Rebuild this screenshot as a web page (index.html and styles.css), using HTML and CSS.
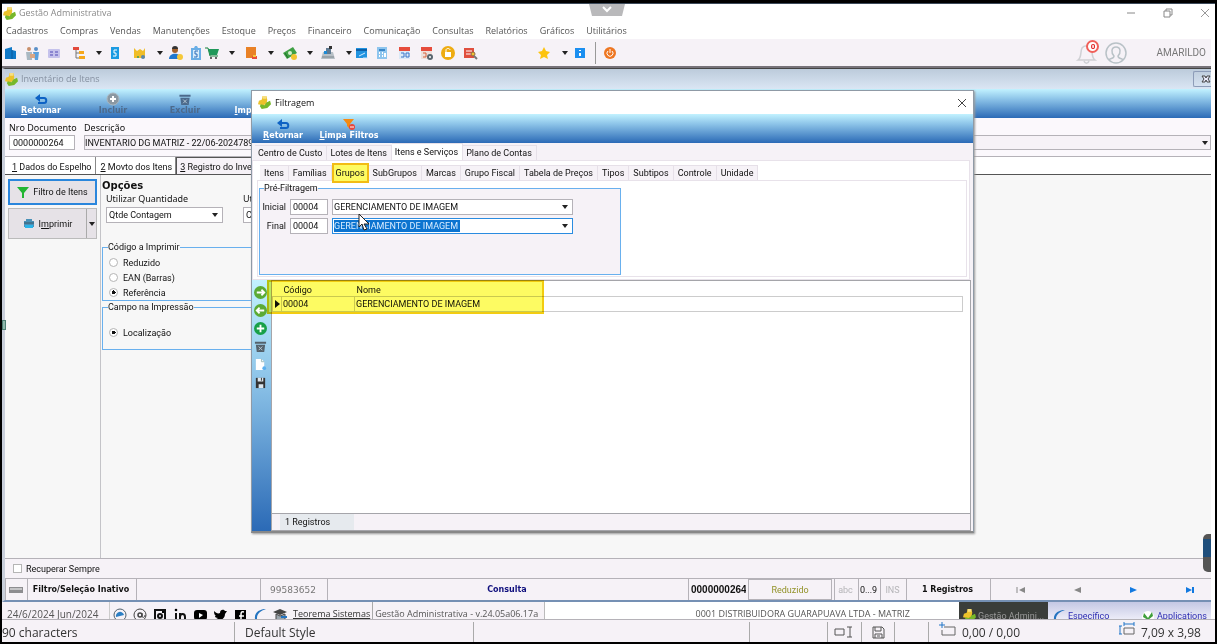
FILE: index.html
```html
<!DOCTYPE html>
<html lang="pt-BR">

<head>
    <meta charset="UTF-8">
    <title>Gestão Administrativa</title>
    <link rel="stylesheet" href="styles.css">
</head>

<body>
    <!-- shared icons -->
    <svg class="defs" aria-hidden="true">
        <symbol id="i-app" viewBox="0 0 14 14">
            <path d="M5 0h4l1 4-1 5-4 1-5-1 1-4 3-1z" fill="#ecc22b" />
            <path d="M3 9l4 1 2-3 4-2 1 4-4 4-6 1-2-3z" fill="#77b82a" />
            <path d="M5 0h4v3H5z" fill="#f7df80" />
        </symbol>
        <symbol id="i-back" viewBox="0 0 14 12">
            <path d="M4 4h6c3 0 3 5 0 5H4" fill="none" stroke="#0d62c4" stroke-width="2" />
            <path d="M6 0v8L1 4z" fill="#0d62c4" />
        </symbol>
        <symbol id="i-close" viewBox="0 0 10 10">
            <path d="M1 1l8 8M9 1L1 9" fill="none" stroke="currentColor" />
        </symbol>
        <symbol id="i-trash" viewBox="0 0 14 14">
            <path d="M1 2h12v2H1zM2 5h10l-1 8H3z" fill="currentColor" />
            <path d="M5 7l4 4M9 7l-4 4" stroke="#b9cbd8" fill="none" />
        </symbol>
    </svg>

    <div class="screen">
        <header class="titlebar">
            <svg class="ico" width="13" height="13"><use href="#i-app" /></svg>
            <span>Gestão Administrativa</span>
            <div class="win-btns">
                <button aria-label="Minimizar"><svg width="10" height="10"><path d="M1 5h8" stroke="#888" /></svg></button>
                <button aria-label="Restaurar"><svg width="10" height="10"><path d="M1 3h6v6H1zM3 3V1h6v6H7" fill="none" stroke="#888" /></svg></button>
                <button aria-label="Fechar"><svg width="10" height="10"><use href="#i-close" /></svg></button>
            </div>
        </header>
        <button class="pull" aria-label="Abrir barra"><svg width="36" height="12"><path d="M0 0h36l-3 12H3z" fill="#b9b9bb" /><path d="M14 3l4 4 4-4" fill="none" stroke="#fff" stroke-width="2" /></svg></button>

        <nav class="menu">
            <a href="#">Cadastros</a>
            <a href="#">Compras</a>
            <a href="#">Vendas</a>
            <a href="#">Manutenções</a>
            <a href="#">Estoque</a>
            <a href="#">Preços</a>
            <a href="#">Financeiro</a>
            <a href="#">Comunicação</a>
            <a href="#">Consultas</a>
            <a href="#">Relatórios</a>
            <a href="#">Gráficos</a>
            <a href="#">Utilitários</a>
        </nav>

        <div class="toolbar">
            <div class="tools">
                <button aria-label="Empresa"><svg viewBox="0 0 16 16"><path d="M3 4l7-2v3l4 1v8H3z" fill="#1079c8" /><path d="M10 5v9" stroke="#0a5a9c" /></svg></button>
                <button aria-label="Clientes"><svg viewBox="0 0 16 16"><circle cx="5" cy="4" r="2" fill="#c98f6b" /><circle cx="12" cy="4" r="2" fill="#5a90c8" /><path d="M2 7h6v8H3z" fill="#a9b8c2" /><path d="M9 7h6l-1 8h-3z" fill="#5aa0dc" /><path d="M6 9h5v4H6z" fill="#d8a684" /></svg></button>
                <button aria-label="Cartões"><svg viewBox="0 0 16 16"><rect x="2" y="4" width="12" height="9" rx="1" fill="#c5c2ec" /><path d="M4 7h3M9 7h3M4 10h3M9 10h3" stroke="#8a85d0" stroke-width="2" /></svg></button>
                <button aria-label="Estrutura"><svg viewBox="0 0 16 16"><path d="M2 2h6v3H2z" fill="#e2493c" /><path d="M5 5v8h4M5 8h4" fill="none" stroke="#777" /><path d="M8 6h5v3H8zM8 11h6v3H8z" fill="#f5a81c" /></svg></button>
                <i class="drop"></i>
                <button aria-label="Preço"><svg viewBox="0 0 16 16"><rect x="5" y="2" width="8" height="12" fill="#1c9be2" /><path d="M11 5H8v3h2v3H7" fill="none" stroke="#fff" /></svg></button>
                <button aria-label="Mapa"><svg viewBox="0 0 16 16"><path d="M2 3l3 3 3-2 3 2 2-3v10H2z" fill="#f0bd28" /><circle cx="11" cy="12" r="2" fill="#5c87a8" /><circle cx="6" cy="12" r="1" fill="#3f9f5c" /></svg></button>
                <i class="drop"></i>
                <button aria-label="Usuário"><svg viewBox="0 0 16 16"><circle cx="7" cy="5" r="3" fill="#a3622c" /><path d="M4 4a3 3 0 0 1 6 0z" fill="#333" /><path d="M1 14c0-7 12-7 12 0z" fill="#1e78cf" /><circle cx="12" cy="12" r="3" fill="#f5c83a" /></svg></button>
                <button aria-label="Lista de preços"><svg viewBox="0 0 16 16"><path d="M3 3h3l1-2h2l1 2h3v12H3z" fill="#6aaee6" /><path d="M5 5h6v8H5z" fill="#d8ecfa" /><path d="M10 6H7v3h2v3H6" fill="none" stroke="#2c6db8" /></svg></button>
                <button aria-label="Carrinho"><svg viewBox="0 0 16 16"><path d="M1 3h3l2 8h8" fill="none" stroke="#17803c" /><path d="M4 4h11l-2 6H6z" fill="#20985a" /><circle cx="7" cy="13" r="1" fill="#333" /><circle cx="12" cy="13" r="1" fill="#333" /></svg></button>
                <i class="drop"></i>
                <button aria-label="Caixa"><svg viewBox="0 0 16 16"><path d="M3 2h10v11H3z" fill="#e98126" /><path d="M9 11h5v3H9z" fill="#e84d3c" /><path d="M10 10h3v2h-3z" fill="#f5c83a" /></svg></button>
                <i class="drop"></i>
                <button aria-label="Dinheiro"><svg viewBox="0 0 16 16"><path d="M1 8l10-6 4 6-10 6z" fill="#3fa045" /><circle cx="8" cy="8" r="2" fill="#d6efcf" /><circle cx="12" cy="12" r="3" fill="#f3c431" /><path d="M3 8l3 5" stroke="#216f2b" /></svg></button>
                <i class="drop"></i>
                <button aria-label="Balança"><svg viewBox="0 0 16 16"><path d="M3 7h10l2 7H1z" fill="#b7bfc6" /><path d="M6 3h5v6H6z" fill="#607a92" /><path d="M4 6h3v3H4z" fill="#1e8bd6" /><path d="M9 1h3v3H9z" fill="#333" /><path d="M2 12h12" stroke="#7c858c" /></svg></button>
                <i class="drop"></i>
                <button aria-label="Relatório"><svg viewBox="0 0 16 16"><rect x="3" y="3" width="11" height="10" fill="#2193e0" /><path d="M3 5h11" stroke="#0c60a8" stroke-width="2" /><path d="M6 11l6-3M10 13h5" stroke="#cfeaff" /></svg></button>
                <button aria-label="Calculadora"><svg viewBox="0 0 16 16"><rect x="3" y="2" width="10" height="12" fill="#8ec5ee" /><path d="M5 4h6v2H5z" fill="#3b87c8" /><path d="M5 8h1M8 8h1M5 11h1M8 11h1M11 8v4" stroke="#fff" stroke-width="2" /></svg></button>
                <button aria-label="Calendário"><svg viewBox="0 0 16 16"><path d="M3 3h11v11H3z" fill="#dce9f6" /><path d="M3 2h11v4H3z" fill="#e64c3c" /><path d="M5 8h3v4H5M10 8h3v4h-3z" fill="none" stroke="#3b74c8" /></svg></button>
                <button aria-label="Agenda"><svg viewBox="0 0 16 16"><path d="M3 3h11v11H3z" fill="#eee0dc" /><path d="M3 2h11v4H3z" fill="#e64c3c" /><path d="M5 8h3v4H5" fill="none" stroke="#d8623c" /><circle cx="12" cy="12" r="3" fill="#59666f" /><circle cx="12" cy="12" r="1" fill="#fff" /></svg></button>
                <button aria-label="Bloquear"><svg viewBox="0 0 16 16"><circle cx="8" cy="8" r="7" fill="#eeac12" /><path d="M5 7h6v5H5z" fill="#fff" /><path d="M6 7V5c0-2 4-2 4 0" fill="none" stroke="#fff" /></svg></button>
                <button aria-label="Consultar"><svg viewBox="0 0 16 16"><path d="M2 3h10v10H2z" fill="#e04f3e" /><path d="M4 6h6M4 9h5" stroke="#fff" /><circle cx="11" cy="9" r="2" fill="#f3c431" stroke="#8b6a4a" /><path d="M12 11l3 3" stroke="#777" stroke-width="2" /></svg></button>
                <button aria-label="Favoritos"><svg viewBox="0 0 16 16"><path d="M8 2l2 4 4 1-3 3 1 4-4-2-4 2 1-4-3-3 4-1z" fill="#fdc40f" /></svg></button>
                <i class="drop"></i>
                <button aria-label="Informações"><svg viewBox="0 0 16 16"><rect x="3" y="3" width="10" height="10" fill="#1b8ff0" /><path d="M8 5v1M8 8v3" stroke="#fff" stroke-width="2" /></svg></button>
                <i class="sep"></i>
                <button aria-label="Sair"><svg viewBox="0 0 16 16"><circle cx="8" cy="8" r="6" fill="#ee7722" /><path d="M6 6a3 3 0 1 0 4 0M8 4v4" fill="none" stroke="#fff" /></svg></button>
            </div>
            <button class="bell" aria-label="Notificações"><svg width="26" height="26" viewBox="0 0 26 26"><path d="M3 20c4-3 2-8 4-12 2-3 7-3 9 0 2 4 0 9 4 12zM9 21c1 3 4 3 5 0" fill="none" stroke="#cfd0d4" stroke-width="1.5" /></svg><b>0</b></button>
            <svg width="22" height="22" viewBox="0 0 22 22"><circle cx="11" cy="11" r="10" fill="none" stroke="#b9c2c7" stroke-width="1.5" /><path d="M4 18c1-2 5-1 5-4-3-3-3-9 2-9s5 6 2 9c0 3 4 2 5 4" fill="none" stroke="#b9c2c7" stroke-width="1.5" /></svg>
            <span class="user">AMARILDO</span>
        </div>

        <main class="child">
            <div class="child-title">
                <svg class="ico" width="13" height="13"><use href="#i-app" /></svg>
                <span>Inventário de Itens</span>
                <button aria-label="Fechar janela"><svg width="10" height="8" viewBox="0 0 10 8"><path d="M1 1h3l1 2 1-2h3L7 4l2 3H6L5 5 4 7H1l2-3z" fill="#eef" stroke="#444" /></svg></button>
            </div>
            <div class="actions">
                <button><svg width="14" height="12"><use href="#i-back" /></svg><span><u>R</u>etornar</span></button>
                <button disabled><svg width="14" height="14" viewBox="0 0 14 14"><circle cx="7" cy="7" r="6" fill="#8b98a2" stroke="#a9b6be" /><path d="M7 4v6M4 7h6" stroke="#fff" stroke-width="2" /></svg><span>Incluir</span></button>
                <button disabled><svg width="14" height="13"><use href="#i-trash" /></svg><span>Excluir</span></button>
                <button><span><u>I</u>mprimir</span></button>
            </div>

            <div class="doc">
                <label for="nro">Nro Documento</label>
                <label for="desc">Descrição</label>
                <input id="nro" type="text" value="0000000264">
                <div class="desc">
                    <input id="desc" type="text" value="INVENTARIO DG MATRIZ - 22/06-20247896">
                    <button class="drop" aria-label="Abrir lista"></button>
                </div>
            </div>

            <div class="tabs">
                <button><u>1</u> Dados do Espelho</button>
                <button><u>2</u> Movto dos Itens</button>
                <button class="on"><u>3</u> Registro do Inven.</button>
            </div>

            <div class="body">
                <div class="side">
                    <button class="filter"><svg width="12" height="12" viewBox="0 0 12 12"><path d="M0 1h12L7 7v5H5V7z" fill="#22b532" /></svg>Filtro de Itens</button>
                    <div class="print">
                        <button><svg width="12" height="11" viewBox="0 0 12 11"><path d="M1 3h2V1h6v2h2v6H1z" fill="#4a91b8" /><path d="M2 7h8v3H2z" fill="#2cb4e8" /><path d="M1 5h10" stroke="#3d5666" /></svg><span>I<u>m</u>primir</span></button>
                        <button aria-label="Opções de impressão"><i class="drop"></i></button>
                    </div>
                </div>
                <div class="options">
                    <h2>Opções</h2>
                    <div class="qty">
                        <label for="qtd">Utilizar Quantidade</label>
                        <label for="cus">Ut.</label>
                        <div class="sel"><select id="qtd"><option>Qtde Contagem</option></select><i class="drop"></i></div>
                        <div class="sel"><select id="cus"><option>Custo</option></select><i class="drop"></i></div>
                    </div>
                    <fieldset>
                        <legend>Código a Imprimir</legend>
                        <label><input type="radio" name="cod">Reduzido</label>
                        <label><input type="radio" name="cod">EAN (Barras)</label>
                        <label><input type="radio" name="cod" checked>Referência</label>
                    </fieldset>
                    <fieldset class="campo">
                        <legend>Campo na Impressão</legend>
                        <label><input type="radio" name="campo" checked>Localização</label>
                    </fieldset>
                </div>
            </div>

            <div class="recover">
                <label><input type="checkbox">Recuperar Sempre</label>
            </div>
            <div class="status">
                <div><svg width="14" height="6" viewBox="0 0 14 6"><path d="M0 0h14v6H0z" fill="#8d8d90" /><path d="M1 1h12v2H1z" fill="#c4c4c6" /></svg></div>
                <div class="strong">Filtro/Seleção Inativo</div>
                <div></div>
                <div class="dim">99583652</div>
                <div class="query">Consulta</div>
                <div class="num">0000000264</div>
                <div class="olive">Reduzido</div>
                <div class="off">abc</div>
                <div>0...9</div>
                <div class="off">INS</div>
                <div class="strong">1 Registros</div>
                <div class="pager">
                    <button aria-label="Primeiro" disabled><svg width="10" height="8"><path d="M1 1v6" stroke="currentColor" /><path d="M9 1v6L3 4z" fill="currentColor" /></svg></button>
                    <button aria-label="Anterior" disabled><svg width="10" height="8"><path d="M9 1v6L2 4z" fill="currentColor" /></svg></button>
                    <button aria-label="Próximo"><svg width="10" height="8"><path d="M1 1v6l7-3z" fill="currentColor" /></svg></button>
                    <button aria-label="Último"><svg width="10" height="8"><path d="M1 1v6l6-3z" fill="currentColor" /><path d="M8 1v6" stroke="currentColor" stroke-width="2" /></svg></button>
                </div>
            </div>
        </main>

        <div class="taskbar">
            <span class="date">24/6/2024 Jun/2024</span>
            <div class="social">
                <svg viewBox="0 0 14 14"><circle cx="7" cy="7" r="6" fill="none" stroke="#51606c" /><path d="M3 9a4 4 0 0 1 8-2l-4 1z" fill="#2d7fc4" /></svg>
                <svg viewBox="0 0 14 14"><circle cx="7" cy="7" r="6" fill="none" stroke="#444" /><circle cx="7" cy="7" r="2" fill="none" stroke="#444" stroke-width="1.5" /><path d="M9 5v3c0 2 3 2 3-1" fill="none" stroke="#444" /></svg>
                <svg viewBox="0 0 14 14"><path d="M2 2h10v11H2z" fill="none" stroke="#111" stroke-width="2" /><circle cx="7" cy="8" r="2" fill="none" stroke="#111" stroke-width="2" /><path d="M9 3h2v2H9z" /></svg>
                <svg viewBox="0 0 14 14"><path d="M3 5v9M7 14V5m0 4c0-4 5-4 5 0v5" fill="none" stroke="#111" stroke-width="2" /><circle cx="3" cy="2" r="1.3" /></svg>
                <svg viewBox="0 0 14 14"><rect x="1" y="2" width="13" height="10" rx="3" /><path d="M6 5v5l4-3z" fill="#fff" /></svg>
                <svg viewBox="0 0 14 14"><path d="M1 3c2 2 4 3 6 2 0-4 4-4 5-2h2l-2 3c0 6-7 8-11 5 2 0 3 0 4-1-2 0-3-1-3-2h1C1 7 1 4 1 3z" /></svg>
                <svg viewBox="0 0 14 14"><path d="M2 2h11v12H2z" /><path d="M11 4c-3-1-3 1-3 3v7M6 8h5" fill="none" stroke="#fff" stroke-width="1.5" /></svg>
                <svg viewBox="0 0 14 14"><path d="M13 1C7 1 1 4 2 11l3 3C2 8 6 3 13 1z" fill="#2474c0" /></svg>
                <svg viewBox="0 0 14 14"><path d="M0 4l7-3 7 3-7 3z" fill="#444" /><path d="M3 6v6l5 2 4-2V6l-5 2z" fill="#9aa5ad" stroke="#444" /><path d="M8 9h6" stroke="#2474c0" stroke-width="2" /></svg>
            </div>
            <a href="#" class="site">Teorema Sistemas</a>
            <span class="version">Gestão Administrativa - v.24.05a06.17a</span>
            <span class="company">0001 DISTRIBUIDORA GUARAPUAVA LTDA - MATRIZ</span>
            <div class="apps">
                <button class="cur"><svg width="13" height="13"><use href="#i-app" /></svg>Gestão Admini...</button>
                <button><svg width="14" height="14" viewBox="0 0 14 14"><path d="M13 1C7 1 1 4 2 11l3 3C2 8 6 3 13 1z" fill="#2474c0" /></svg>Específico</button>
                <button class="last"><svg width="14" height="14" viewBox="0 0 14 14"><circle cx="7" cy="8" r="6" fill="#fff" /><path d="M3 4l4 5 4-6 1 4-5 4-5-3z" fill="#3f9f3c" /></svg>Applications</button>
            </div>
        </div>

        <footer class="office">
            <div>90 characters</div>
            <div class="style">Default Style</div>
            <div></div>
            <div></div>
            <div class="mid"><svg width="22" height="14" viewBox="0 0 22 14"><path d="M1 4h9v6H1zM13 2h5M13 12h5M16 2v10" fill="none" stroke="#555" /></svg></div>
            <div class="mid"><svg width="13" height="13" viewBox="0 0 13 13"><path d="M1 1h9l2 2v9H1zM3 1v4h6V1M3 12V8h7v4M5 10h3" fill="none" stroke="#555" /></svg></div>
            <div></div>
            <div class="pos">
                <svg width="18" height="16" viewBox="0 0 18 16"><path d="M5 5h11v8H3V8" fill="none" stroke="#666" /><path d="M3 0v6M0 3h6" stroke="#2277c8" /></svg>
                <span>0,00 / 0,00</span>
            </div>
            <div class="size">
                <svg width="18" height="16" viewBox="0 0 18 16"><path d="M6 6h10v6H6z" fill="none" stroke="#666" /><path d="M1 4h3M1 12h3M2 4v8M6 2h10M6 0v4M16 0v4" fill="none" stroke="#2277c8" /></svg>
                <span>7,09 x 3,98</span>
            </div>
        </footer>

        <div class="grip"></div>
        <div class="bubble"></div>

        <!-- filter dialog -->
        <section class="dialog" role="dialog" aria-label="Filtragem">
            <div class="dlg-title">
                <svg class="ico" width="13" height="13"><use href="#i-app" /></svg>
                <span>Filtragem</span>
                <button aria-label="Fechar"><svg width="10" height="10"><use href="#i-close" /></svg></button>
            </div>
            <div class="actions">
                <button><svg width="14" height="12"><use href="#i-back" /></svg><span><u>R</u>etornar</span></button>
                <button><svg width="14" height="13" viewBox="0 0 14 13"><path d="M1 1h11L8 6v5L5 8V6z" fill="#f58a12" /><circle cx="10" cy="9" r="3" fill="#e8453c" /><path d="M8 9h4" stroke="#fff" /></svg><span><u>L</u>impa Filtros</span></button>
            </div>
            <div class="dtabs">
                <button>Centro de Custo</button>
                <button>Lotes de Itens</button>
                <button class="on">Itens e Serviços</button>
                <button>Plano de Contas</button>
            </div>
            <div class="pane">
                <div class="dtabs sub">
                    <button>Itens</button>
                    <button>Famílias</button>
                    <button class="marked">Grupos</button>
                    <button>SubGrupos</button>
                    <button>Marcas</button>
                    <button>Grupo Fiscal</button>
                    <button>Tabela de Preços</button>
                    <button>Tipos</button>
                    <button>Subtipos</button>
                    <button>Controle</button>
                    <button>Unidade</button>
                </div>
                <div class="inner">
                    <fieldset class="pre">
                        <legend>Pré-Filtragem</legend>
                        <label for="ini">Inicial</label>
                        <input id="ini" type="text" value="00004">
                        <div class="combo">
                            <input type="text" aria-label="Grupo inicial" value="GERENCIAMENTO DE IMAGEM">
                            <button class="drop" aria-label="Abrir lista"></button>
                        </div>
                        <label for="fim">Final</label>
                        <input id="fim" type="text" value="00004">
                        <div class="combo focus">
                            <input type="text" aria-label="Grupo final" value="GERENCIAMENTO DE IMAGEM">
                            <button class="drop" aria-label="Abrir lista"></button>
                        </div>
                    </fieldset>
                </div>
            </div>
            <div class="result">
                <div class="rail">
                    <button aria-label="Adicionar"><svg viewBox="0 0 14 14"><circle cx="7" cy="7" r="7" fill="#5bab35" /><path d="M3 7h7M8 4l3 3-3 3" fill="none" stroke="#fff" stroke-width="2" /></svg></button>
                    <button aria-label="Remover"><svg viewBox="0 0 14 14"><circle cx="7" cy="7" r="7" fill="#5bab35" /><path d="M11 7H4M6 4L3 7l3 3" fill="none" stroke="#fff" stroke-width="2" /></svg></button>
                    <button aria-label="Incluir"><svg viewBox="0 0 14 14"><circle cx="7" cy="7" r="7" fill="#18a048" /><path d="M7 3v8M3 7h8" stroke="#fff" stroke-width="2" /></svg></button>
                    <button class="bin" aria-label="Excluir"><svg viewBox="0 0 14 14"><use href="#i-trash" /></svg></button>
                    <button aria-label="Novo"><svg viewBox="0 0 14 14"><path d="M2 1h6l3 3v9H2z" fill="#fff" /><path d="M8 1v3h3" fill="none" stroke="#9bb" /><circle cx="11" cy="11" r="2" fill="#5ab0f0" /></svg></button>
                    <button aria-label="Salvar"><svg viewBox="0 0 14 14"><path d="M2 2h10v11H2z" fill="#333" /><path d="M4 2h6v4H4zM5 9h5v4H5z" fill="#dce6ee" /><path d="M8 2v3" stroke="#333" /></svg></button>
                </div>
                <div class="list">
                    <table>
                        <thead>
                            <tr><th class="mark"></th><th class="code">Código</th><th>Nome</th></tr>
                        </thead>
                        <tbody>
                            <tr><td class="mark"><i></i></td><td>00004</td><td>GERENCIAMENTO DE IMAGEM</td></tr>
                        </tbody>
                    </table>
                    <div class="count"><span>1 Registros</span></div>
                </div>
                <div class="highlight"></div>
            </div>
            <svg class="cursor" width="12" height="18" viewBox="0 0 12 18"><path d="M1 1v13l3-3 2 6 3-1-3-5h5z" fill="#fff" stroke="#222" /></svg>
        </section>
    </div>
</body>

</html>
```
FILE: styles.css
```css
* {
    box-sizing: border-box;
    margin: 0;
    padding: 0;
}
:root {
    --ui: Roboto, "Liberation Sans", sans-serif;
    --menu: "Open Sans", "Noto Sans", sans-serif;
    --bold: "DejaVu Sans", sans-serif;
    --face: #f6f2f7;
    --line: #b5b2b8;
    --blue: #69b0ee;
    --bar: linear-gradient(#c2f2ff, #8cc3e8 35%, #2b6ab6);
}
body {
    background: #000;
    font: 9px/12px var(--ui);
    color: #111;
}
button {
    border: 0;
    background: none;
    font: inherit;
    color: inherit;
}
input, select {
    font: inherit;
    color: inherit;
    min-width: 0;
    border-radius: 0;
    outline: 0;
}
a {
    color: inherit;
    text-decoration: none;
}
svg {
    display: block;
    flex: none;
}
.defs {
    position: absolute;
    width: 0;
    height: 0;
}
.screen {
    position: relative;
    display: flex;
    flex-direction: column;
    min-height: 100vh;
    border: 2px solid #000;
    border-top-width: 3px;
    background: #fff;
    box-shadow: inset 0 1px #3c4a5a;
    padding: 1px 4px 0 0;
}

/* small black triangle used by every drop-down */
.drop {
    display: block;
    width: 14px;
    height: 4px;
    flex: none;
}
.drop::after {
    content: '';
    display: block;
    margin: 0 auto;
    width: 0;
    border: 3px solid transparent;
    border-top: 4px solid #222;
    border-bottom: 0;
}

/* main window */
.titlebar {
    display: flex;
    align-items: center;
    height: 18px;
    padding: 0 1px;
    gap: 3px;
    font: 9px/12px var(--menu);
    color: #8a8a8a;
}
.win-btns {
    display: flex;
    gap: 27px;
    margin-left: auto;
    color: #999;
}
.pull {
    position: absolute;
    top: 1px;
    left: 587px;
}
.menu {
    display: flex;
    align-items: center;
    height: 17px;
    padding-left: 4px;
    gap: 12px;
    font: 9px/12px var(--menu);
    color: #555;
}
.toolbar {
    display: flex;
    align-items: center;
    height: 29px;
    background: var(--face);
    border-bottom: 2px solid #77737a;
}
.tools {
    display: grid;
    align-items: center;
    grid-template-columns: 22px 22px 25px 24px 11px 26px 24px 12px 20px 16px 24px 15px 24px 15px 24px 14px 25px 8px 21px 22px 22px 22px 22px 74px 25px 11px 23px 7px 16px;
    margin-right: auto;
}
.tools button, .tools svg {
    width: 16px;
    height: 16px;
}
.tools .drop {
    width: 8px;
}
.sep {
    width: 1px;
    height: 22px;
    background: #999;
}
.bell {
    position: relative;
    margin-right: 4px;
}
.bell b {
    position: absolute;
    top: 0;
    right: 2px;
    width: 13px;
    height: 13px;
    border: 2px solid #f0605a;
    border-radius: 50%;
    background: #fff;
    font: bold 8px/9px var(--ui);
    color: #e02020;
}
.user {
    margin: 0 5px 0 29px;
    font-size: 10px;
    color: #777;
}

/* inventory window */
.child {
    display: flex;
    flex-direction: column;
    flex: 1;
    border-top: 1px solid #444;
    border-left: 3px solid #c9cfdb;
    border-bottom: 2px solid #7590b4;
}
.child-title {
    display: flex;
    align-items: center;
    height: 20px;
    gap: 3px;
    background: linear-gradient(#bccbdb, #dae6f4);
    font: 9px/12px var(--menu);
    color: #8590a0;
}
.child-title button {
    margin-left: auto;
    padding: 3px 0 3px 7px;
    border: 1px solid #8d9cb8;
    border-right: 0;
    border-radius: 2px 0 0 2px;
}
.actions {
    display: grid;
    grid-template-columns: 72px 72px 72px 66px;
    height: 29px;
    background: var(--bar);
    font: bold 8px/10px var(--bold);
    color: #fff;
}
.actions button {
    display: flex;
    flex-direction: column;
    align-items: center;
    justify-content: flex-end;
    padding-bottom: 2px;
}
.actions button:disabled {
    color: #4c6a8c;
}
.doc {
    display: grid;
    grid-template-columns: 66px 1fr;
    column-gap: 9px;
    padding: 3px 0 6px 4px;
    background: #fbf8fc;
    border-bottom: 1px solid var(--line);
    line-height: 14px;
}
.doc label, .qty label {
    white-space: nowrap;
    font: 9px/14px "Noto Sans", sans-serif;
}
.doc input {
    width: 100%;
    height: 15px;
    padding: 0 3px;
    border: 1px solid var(--line);
    background: #fff;
}
.doc .desc {
    display: flex;
    align-items: center;
    background: var(--face);
    border: 1px solid var(--line);
}
.doc .desc input {
    height: 13px;
    border: 0;
    padding: 0;
    background: var(--face);
}
.desc .drop {
    width: 10px;
}
.tabs {
    display: flex;
    height: 18px;
    padding-left: 2px;
    border-bottom: 1px solid #555;
    background: #fff;
}
.tabs button {
    padding: 3px 3px 0 5px;
    border-right: 1px solid #888;
    white-space: nowrap;
}
.tabs .on {
    border: 1px solid #555;
    border-bottom: 0;
    padding: 2px 12px 0 3px;
    background: var(--face);
}
.body {
    display: flex;
    flex: 1;
    background: #f7f7f7;
}
.side {
    width: 96px;
    padding: 4px 3px 0;
    border-right: 1px solid #c4c4c8;
}
.side button {
    display: flex;
    align-items: center;
    justify-content: center;
    gap: 4px;
    background: #e6e2e7;
}
.side .filter {
    width: 100%;
    height: 26px;
    border: 2px solid #2a86dc;
}
.print {
    display: flex;
    height: 31px;
    margin-top: 3px;
    border: 1px solid #bbb;
}
.print button {
    flex: 1;
}
.print button + button {
    flex: none;
    width: 10px;
    border-left: 1px solid #aaa;
}
.print .drop {
    width: 8px;
}
.options {
    flex: 1;
    padding: 5px 1px;
}
.options h2 {
    font: bold 10px/12px var(--bold);
}
.qty {
    display: grid;
    grid-template-columns: 117px 117px;
    column-gap: 20px;
    padding-left: 4px;
}
.sel {
    display: flex;
    align-items: center;
    height: 16px;
    margin-top: 1px;
    border: 1px solid var(--line);
    background: #fff;
}
.sel select {
    flex: 1;
    height: 14px;
    padding-left: 2px;
    border: 0;
    background: #fff;
    appearance: none;
}
fieldset {
    border: 1px solid var(--blue);
}
legend {
    margin-left: 5px;
}
.options fieldset {
    width: 300px;
    height: 60px;
    margin-top: 18px;
    padding-top: 2px;
}
.options .campo {
    height: 49px;
    margin-top: 0;
    padding-top: 0;
}
.options fieldset label {
    display: flex;
    align-items: center;
    gap: 5px;
    height: 15px;
    padding-left: 6px;
}
.options .campo label {
    margin-top: 12px;
}
input[type=radio], input[type=checkbox] {
    appearance: none;
    width: 9px;
    height: 9px;
    border: 1px solid #b5b5b5;
    background: #fff;
}
input[type=radio] {
    border-radius: 50%;
}
input[type=radio]:checked {
    background: radial-gradient(#111 2px, #fff 2px);
}
.recover {
    display: flex;
    align-items: center;
    height: 21px;
    padding-left: 8px;
    border-top: 1px solid var(--line);
    border-bottom: 1px solid var(--line);
    background: var(--face);
}
.recover label {
    display: flex;
    align-items: center;
    gap: 4px;
}
.status {
    display: grid;
    grid-template-columns: 22px 109px 124px 67px 1fr 60px 86px 24px 22px 26px 84px 221px;
    height: 21px;
    background: var(--face);
}
.status > div {
    display: flex;
    align-items: center;
    justify-content: center;
    border-left: 1px solid var(--line);
    margin-right: 2px;
    overflow: hidden;
    white-space: nowrap;
}
.status .strong, .status .query {
    font: bold 8px/12px var(--bold);
}
.status .num {
    font: bold 10px/12px "Liberation Sans", sans-serif;
    justify-content: flex-start;
    padding-left: 2px;
}
.status .dim {
    font: 9px/12px var(--bold);
    color: #777;
}
.status .query {
    color: #10107e;
}
.status .olive {
    color: #929228;
    border: 1px solid var(--line);
}
.status .off {
    color: #b5b5b8;
}
.status .pager {
    justify-content: space-between;
    padding: 0 14px 0 25px;
    color: #1279e0;
}
.pager button:disabled {
    color: #888;
}

/* taskbar, cut by the status bar below */
.taskbar {
    display: flex;
    height: 17px;
    overflow: hidden;
    background: #fff;
    font: 9px/24px var(--menu);
    color: #555;
    white-space: nowrap;
}
.taskbar .date {
    width: 108px;
    padding-left: 5px;
    border-right: 1px solid #ccc;
    font-size: 10px;
    background: var(--face);
}
.social {
    display: flex;
    gap: 6px;
    padding: 6px 6px 0 3px;
    background: var(--face);
}
.social svg {
    width: 14px;
    height: 14px;
}
.site {
    padding-right: 2px;
    border-right: 1px solid #aaa;
    text-decoration: underline;
    color: #333;
    background: var(--face);
}
.version {
    padding: 0 6px 0 2px;
    border-right: 1px solid #bbb;
    background: var(--face);
}
.company {
    margin-left: auto;
    padding-right: 49px;
}
.apps {
    display: flex;
    background: linear-gradient(#c4c8e4, #ececf8);
    color: #2b2bb0;
}
.apps button {
    display: flex;
    align-items: center;
    width: 89px;
    height: 25px;
    padding: 2px 4px 0;
    gap: 2px;
    font: 9px/12px var(--ui);
    text-align: left;
}
.apps .cur {
    background: #3a3d3a;
    color: #999;
}
.apps .last {
    width: 74px;
}

/* office status bar */
.office {
    display: grid;
    grid-template-columns: 232px 239px 276px 78px 34px 33px 34px 1fr 97px;
    height: 23px;
    margin-right: -4px;
    padding-top: 2px;
    border-top: 1px solid var(--line);
    background: var(--face);
    font: 12px/22px "Open Sans", "Noto Sans", sans-serif;
    color: #333;
}
.office > div {
    border-left: 1px solid #aaa;
    height: 20px;
    white-space: nowrap;
}
.office > div:first-child, .office .size {
    border-left: 0;
}
.office .style {
    padding-left: 10px;
}
.office .mid {
    display: flex;
    align-items: center;
    justify-content: center;
}
.office .pos, .office .size {
    display: flex;
    gap: 5px;
}
.office .pos {
    padding-left: 10px;
}

/* things that float over the window edge */
.grip {
    position: absolute;
    left: 0;
    top: 317px;
    width: 4px;
    height: 10px;
    border: 1px solid #4f7f74;
    background: #8fb8ac;
}
.bubble {
    position: absolute;
    right: 4px;
    bottom: 70px;
    width: 8px;
    height: 38px;
    border-radius: 5px 0 0 5px;
    background: linear-gradient(#555 5px, #1f4f7c 5px, #1f4f7c 23px, #555 23px);
}

/* filter dialog */
.dialog {
    position: absolute;
    top: 87px;
    left: 249px;
    right: 241px;
    bottom: 109px;
    display: flex;
    flex-direction: column;
    border: 1px solid #8f9aa6;
    border-bottom: 2px solid #888;
    background: var(--face);
    box-shadow: 1px 1px 2px #999;
}
.dlg-title {
    display: flex;
    align-items: center;
    height: 23px;
    padding: 0 6px;
    gap: 4px;
    background: #fff;
    font: 9px/12px var(--menu);
}
.dlg-title button {
    margin-left: auto;
    color: #444;
}
.dialog .actions {
    grid-template-columns: 62px 70px;
}
.dtabs {
    display: flex;
    align-items: flex-end;
    height: 17px;
    padding-left: 3px;
}
.dtabs button {
    height: 15px;
    padding: 0 4px 0 3px;
    border: 1px solid #e6e0e8;
    border-bottom: 0;
    border-left: 0;
    white-space: nowrap;
}
.dtabs .on {
    height: 17px;
    background: #fff;
}
.pane {
    margin-right: 3px;
    padding: 2px 2px 2px 4px;
    border: 1px solid #e8e2ea;
    background: #fff;
}
.sub button {
    background: var(--face);
    padding: 0 4px;
}
.sub .marked {
    height: 20px;
    margin-bottom: -3px;
    padding: 0 2px;
    border: 2px solid #f2bc14;
    background: #fdfb62;
    position: relative;
}
.inner {
    padding: 1px 0 1px 1px;
    border: 1px solid #e8e2ea;
}
.pre {
    display: grid;
    grid-template-columns: 26px 38px 241px;
    align-content: start;
    gap: 3px 4px;
    width: 362px;
    height: 93px;
    background: var(--face);
    padding-top: 5px;
}
.pre legend {
    margin-left: 4px;
}
.pre label {
    text-align: right;
    line-height: 16px;
}
.pre > input {
    height: 16px;
    padding: 0 2px;
    border: 1px solid var(--line);
    background: #fff;
}
.combo {
    display: flex;
    align-items: center;
    justify-content: space-between;
    height: 16px;
    padding-left: 1px;
    border: 1px solid var(--line);
    background: #fff;
}
.combo input {
    width: 126px;
    height: 12px;
    border: 0;
}
.focus {
    border-color: #2a8ce0;
}
.focus input {
    background: #0c74d0;
    color: #d8ecff;
}
.result {
    position: relative;
    display: flex;
    flex: 1;
}
.rail {
    width: 19px;
    padding-top: 3px;
    background: linear-gradient(#c2f2ff, #8cc3e8 40%, #2b6ab6);
}
.rail button {
    display: block;
    height: 18px;
    padding: 0 2px;
}
.rail svg {
    width: 13px;
    height: 13px;
}
.rail .bin {
    color: #53616b;
}
.list {
    display: flex;
    flex-direction: column;
    flex: 1;
    margin-right: 2px;
    border: 1px solid #a5a5aa;
    background: #fff;
}
.list table {
    width: calc(100% - 7px);
    border-collapse: collapse;
}
.list th {
    height: 15px;
    font-weight: normal;
    text-align: left;
    vertical-align: bottom;
    padding-left: 2px;
}
.list td {
    height: 15px;
    padding-left: 1px;
    border: 1px solid #ccc;
}
.list .mark {
    width: 9px;
    padding-left: 2px;
}
.list .code {
    width: 73px;
}
.mark i {
    display: block;
    width: 5px;
    border: 4px solid transparent;
    border-left: 5px solid #111;
    border-right: 0;
}
.count {
    margin-top: auto;
    height: 17px;
    padding-left: 8px;
    border-top: 1px solid #a5a5aa;
    background: var(--face);
}
.count span {
    display: block;
    width: 74px;
    padding-left: 5px;
    background: #e6eaee;
    line-height: 16px;
}
/* marker over the first row */
.highlight {
    position: absolute;
    left: 15px;
    top: 0;
    width: 277px;
    height: 34px;
    border: 2px solid #f2cc10;
    background: #fdfb62;
    mix-blend-mode: multiply;
}
.cursor {
    position: absolute;
    left: 106px;
    top: 122px;
}
```
